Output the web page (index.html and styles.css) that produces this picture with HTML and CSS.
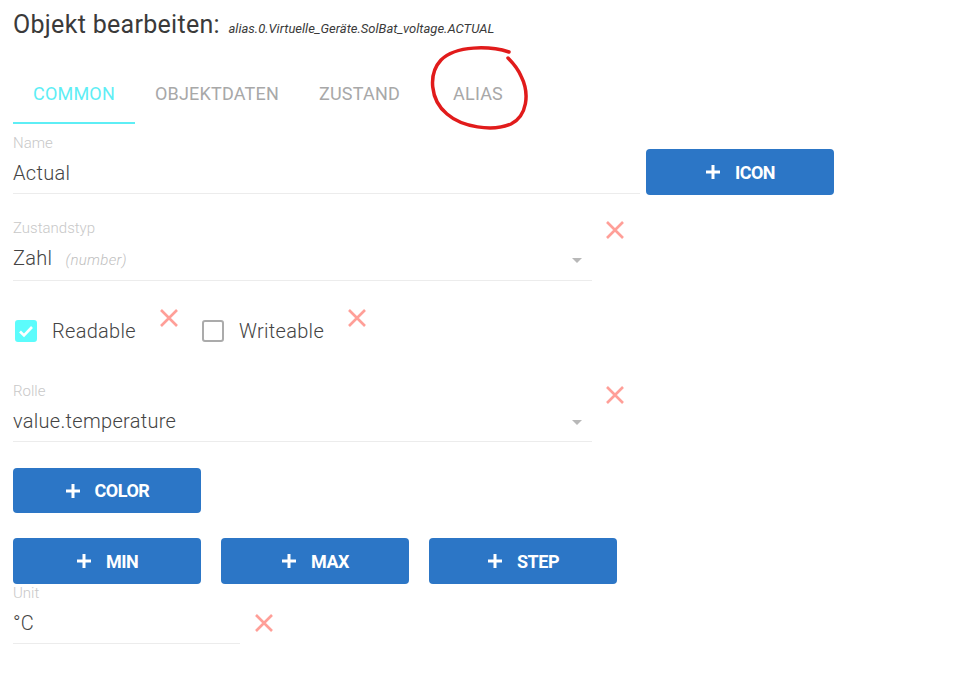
FILE: index.html
```html
<!DOCTYPE html>
<html lang="de">
  <head>
    <meta charset="UTF-8" />
    <title>Objekt bearbeiten</title>
    <link rel="stylesheet" href="styles.css">
  </head>
  <body>
    <div class="page">
      <h1 class="title">Objekt bearbeiten: <span class="obj-id">alias.0.Virtuelle_Geräte.SolBat_voltage.ACTUAL</span></h1>

      <div class="tabs">
        <div class="tab active">COMMON</div>
        <div class="tab">OBJEKTDATEN</div>
        <div class="tab">ZUSTAND</div>
        <div class="tab">ALIAS</div>
      </div>

      <div class="row name-row">
        <div class="field name-field">
          <div class="label">Name</div>
          <div class="value">Actual</div>
        </div>
        <button class="btn icon-btn">
          <svg class="plus" viewBox="0 0 16 16"><path d="M8 1v14M1 8h14" /></svg>ICON
        </button>
      </div>

      <div class="row type-row">
        <div class="field select-field">
          <div class="label">Zustandstyp</div>
          <div class="value">
            <span>Zahl <i class="hint">(number)</i></span>
            <span class="arrow"></span>
          </div>
        </div>
        <svg class="remove" viewBox="0 0 20 20"><path d="M2 2l16 16M18 2L2 18" /></svg>
      </div>

      <div class="row check-row">
        <span class="check checked">
          <svg viewBox="0 0 22 22"><path d="M5 11.5l4 4 8-8.5" /></svg>
        </span>
        <span class="check-label">Readable</span>
        <svg class="remove up" viewBox="0 0 20 20"><path d="M2 2l16 16M18 2L2 18" /></svg>
        <span class="check"></span>
        <span class="check-label">Writeable</span>
        <svg class="remove up" viewBox="0 0 20 20"><path d="M2 2l16 16M18 2L2 18" /></svg>
      </div>

      <div class="row role-row">
        <div class="field select-field">
          <div class="label">Rolle</div>
          <div class="value">
            <span>value.temperature</span>
            <span class="arrow"></span>
          </div>
        </div>
        <svg class="remove role-remove" viewBox="0 0 20 20"><path d="M2 2l16 16M18 2L2 18" /></svg>
      </div>

      <div class="row color-row">
        <button class="btn">
          <svg class="plus" viewBox="0 0 16 16"><path d="M8 1v14M1 8h14" /></svg>COLOR
        </button>
      </div>

      <div class="row btn-row">
        <button class="btn">
          <svg class="plus" viewBox="0 0 16 16"><path d="M8 1v14M1 8h14" /></svg>MIN
        </button>
        <button class="btn">
          <svg class="plus" viewBox="0 0 16 16"><path d="M8 1v14M1 8h14" /></svg>MAX
        </button>
        <button class="btn">
          <svg class="plus" viewBox="0 0 16 16"><path d="M8 1v14M1 8h14" /></svg>STEP
        </button>
      </div>

      <div class="row unit-row">
        <div class="field unit-field">
          <div class="label">Unit</div>
          <div class="value">°C</div>
        </div>
        <svg class="remove unit-remove" viewBox="0 0 20 20"><path d="M2 2l16 16M18 2L2 18" /></svg>
      </div>
    </div>

    <!-- red marker drawn over the ALIAS tab -->
    <svg class="marker" width="120" height="100" viewBox="420 40 120 100">
      <path d="M509 52 C490 46 456 45 441 60 C428 74 430 100 447 114 C462 127 492 132 511 124 C527 116 530 94 521 76 C517 67 512 62 508 58" />
    </svg>
  </body>
</html>
```

FILE: styles.css
```css
body {
  margin: 0;
  font-family: Roboto, "Liberation Sans", sans-serif;
  font-weight: 300;
  color: #333;
  background: #fff;
}

.page {
  padding: 0 13px;
}

.title {
  margin: 0;
  padding-top: 10px;
  font-size: 25px;
  line-height: 30px;
  font-weight: 400;
  letter-spacing: 0.3px;
  color: #3a3a3a;
}
.obj-id {
  font-size: 13px;
  font-style: italic;
  font-weight: 400;
  letter-spacing: 0;
  margin-left: 2px;
}

.tabs {
  display: flex;
  margin-top: 28px;
}
.tab {
  min-width: 116px;
  padding: 10px 20px 16px;
  font-size: 18px;
  line-height: 24px;
  font-weight: 400;
  letter-spacing: 0.2px;
  text-align: center;
  color: #a8a8a8;
  border-bottom: 2px solid transparent;
  box-sizing: border-box;
}
.tab.active {
  color: #5eeef5;
  border-bottom-color: #5eeef5;
}

.row {
  display: flex;
}

.field {
  display: flex;
  flex-direction: column;
}
.label {
  font-size: 15px;
  line-height: 16px;
  color: #c8c8c8;
}
.value {
  display: flex;
  align-items: center;
  justify-content: space-between;
  padding: 10px 0 8px;
  font-size: 20px;
  line-height: 24px;
  letter-spacing: 0.3px;
  color: #444;
  border-bottom: 1px solid #ececec;
}
.hint {
  font-size: 15px;
  color: #c0c0c0;
  margin-left: 8px;
}
.arrow {
  width: 0;
  height: 0;
  margin-right: 10px;
  margin-top: 2px;
  border-left: 5px solid transparent;
  border-right: 5px solid transparent;
  border-top: 5px solid #b8b8b8;
}

.name-row {
  margin-top: 11px;
  align-items: flex-end;
}
.name-field {
  width: 627px;
}
.icon-btn {
  margin-left: 6px;
  margin-bottom: -1px;
}

.type-row {
  margin-top: 26px;
}
.select-field {
  width: 579px;
}

.remove {
  width: 20px;
  height: 20px;
  flex: none;
  fill: none;
  stroke: #ff9f98;
  stroke-width: 2.6;
}
.type-row .remove,
.role-row .remove {
  margin-left: 13px;
}
.role-remove {
  margin-top: 2px;
}

.check-row {
  margin-top: 29px;
  height: 42px;
  align-items: center;
}
.check {
  width: 22px;
  height: 22px;
  margin-left: 2px;
  border: 2px solid #ababab;
  border-radius: 3px;
  box-sizing: border-box;
}
.check.checked {
  background: #5cfcfc;
  border-color: #5cfcfc;
}
.check svg {
  display: block;
  width: 22px;
  height: 22px;
  margin: -2px;
  fill: none;
  stroke: #fff;
  stroke-width: 2.6;
}
.check-label {
  margin-left: 15px;
  font-size: 20px;
  letter-spacing: 0.3px;
  color: #444;
}
.remove.up {
  margin: 0 21px 26px 23px;
}

.role-row {
  margin-top: 31px;
}

.btn {
  display: flex;
  align-items: center;
  justify-content: center;
  width: 188px;
  height: 46px;
  padding: 0;
  border: none;
  border-radius: 4px;
  background: #2c76c6;
  color: #fff;
  font-family: Roboto, "Liberation Sans", sans-serif;
  font-size: 18px;
  font-weight: 700;
  letter-spacing: -0.5px;
  cursor: pointer;
}
.plus {
  width: 16px;
  height: 16px;
  margin-right: 14px;
  fill: none;
  stroke: #fff;
  stroke-width: 3;
}

.color-row {
  margin-top: 26px;
}
.color-row .btn {
  height: 45px;
}
.btn-row {
  margin-top: 25px;
  gap: 20px;
}

.unit-row {
  margin-top: 1px;
  align-items: flex-end;
}
.unit-field {
  width: 227px;
}
.unit-remove {
  margin-left: 14px;
  margin-bottom: 11px;
}

.marker {
  position: absolute;
  left: 420px;
  top: 40px;
  fill: none;
  stroke: #e11b1b;
  stroke-width: 3.5;
  stroke-linecap: round;
}
```
